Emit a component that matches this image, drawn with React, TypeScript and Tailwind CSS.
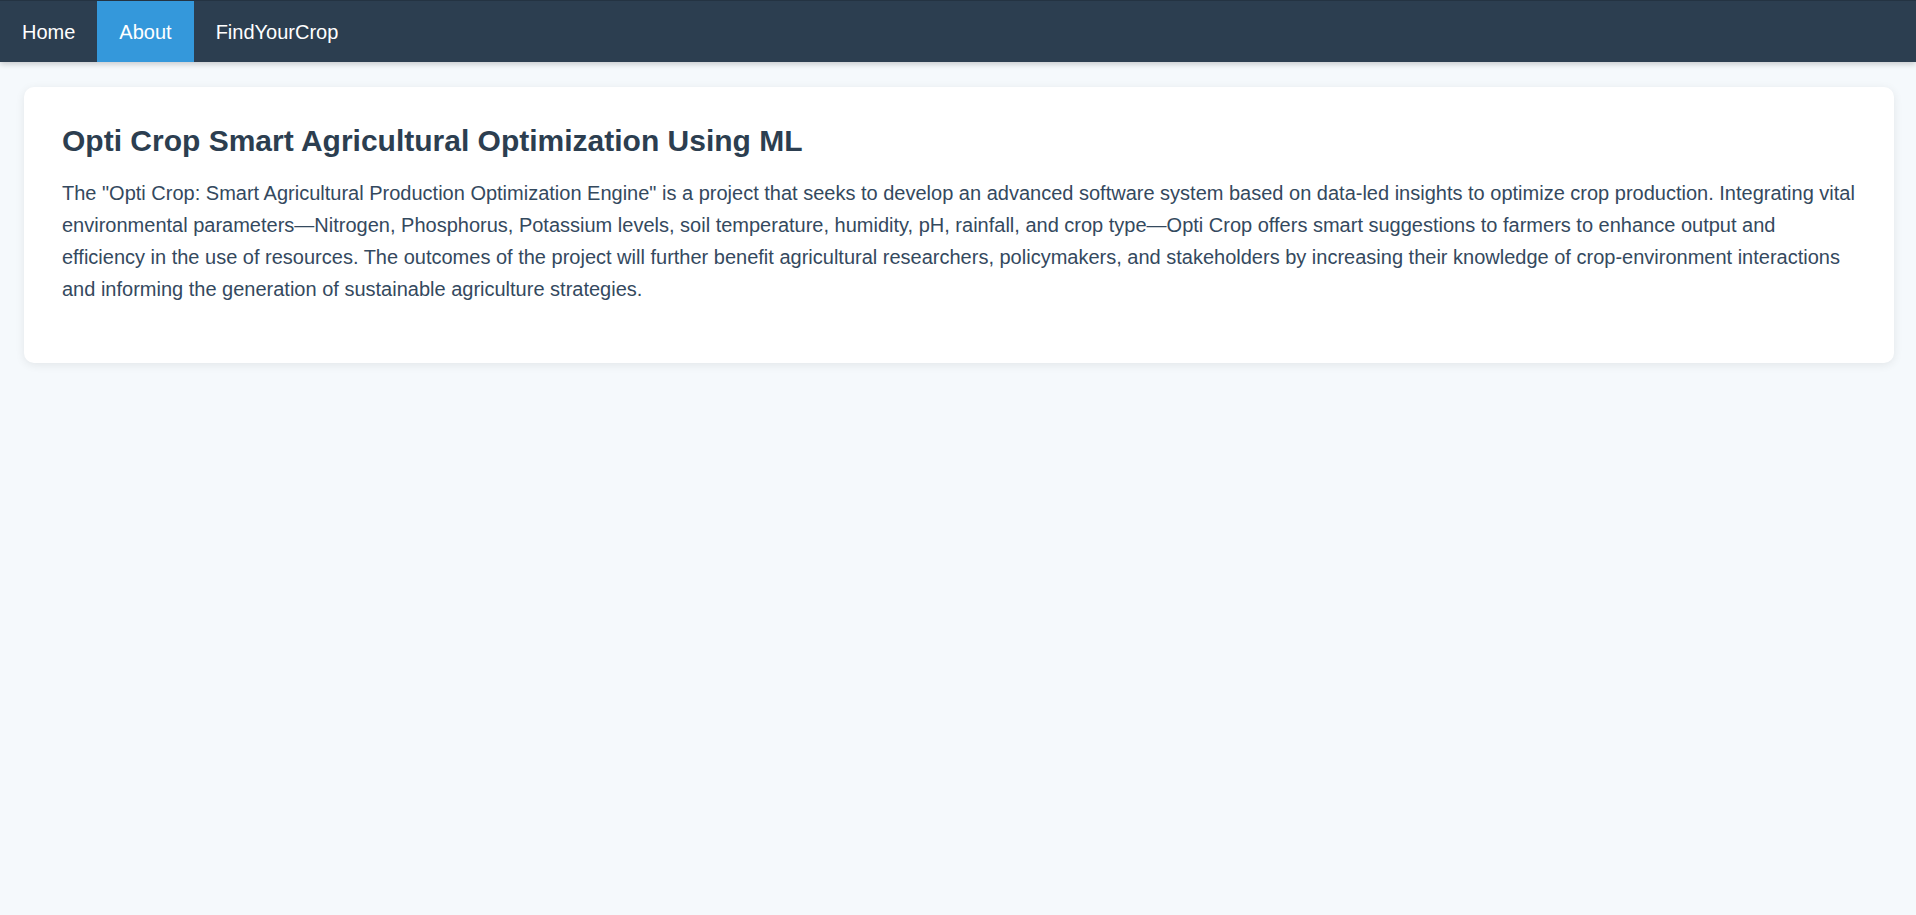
import React from 'react';

const links = ['Home', 'About', 'FindYourCrop'];

export default function App() {
  const active = 'About';

  return (
    <div className="min-h-screen bg-[#f5f9fc] font-['Liberation_Sans',Arial,sans-serif]">
      <nav className="h-[62px] flex bg-[#2c3e50] border-t border-[#243342] shadow-[0_2px_6px_rgba(0,0,0,0.2)]">
        {links.map((l) => (
          <a
            key={l}
            href="#"
            className={`flex items-center px-[22px] text-[20px] text-white ${l === active ? 'bg-[#3498db]' : ''}`}
          >
            {l}
          </a>
        ))}
      </nav>

      <main className="pt-[25px] pl-6 pr-[22px]">
        <section className="bg-white rounded-[10px] shadow-[0_2px_10px_rgba(0,0,0,0.08)] px-[38px] pt-[36px] pb-[40px]">
          <h1 className="text-[30px] leading-[36px] font-bold text-[#2c3e50] mb-[18px]">
            Opti Crop Smart Agricultural Optimization Using ML
          </h1>
          <p className="text-[20px] leading-[32px] text-[#34495e] mb-[18px]">
            The "Opti Crop: Smart Agricultural Production Optimization Engine" is a project that seeks to develop an
            advanced software system based on data-led insights to optimize crop production. Integrating vital
            environmental parameters—Nitrogen, Phosphorus, Potassium levels, soil temperature, humidity, pH, rainfall,
            and crop type—Opti Crop offers smart suggestions to farmers to enhance output and efficiency in the use of
            resources. The outcomes of the project will further benefit agricultural researchers, policymakers, and
            stakeholders by increasing their knowledge of crop-environment interactions and informing the generation of
            sustainable agriculture strategies.
          </p>
        </section>
      </main>
    </div>
  );
}
